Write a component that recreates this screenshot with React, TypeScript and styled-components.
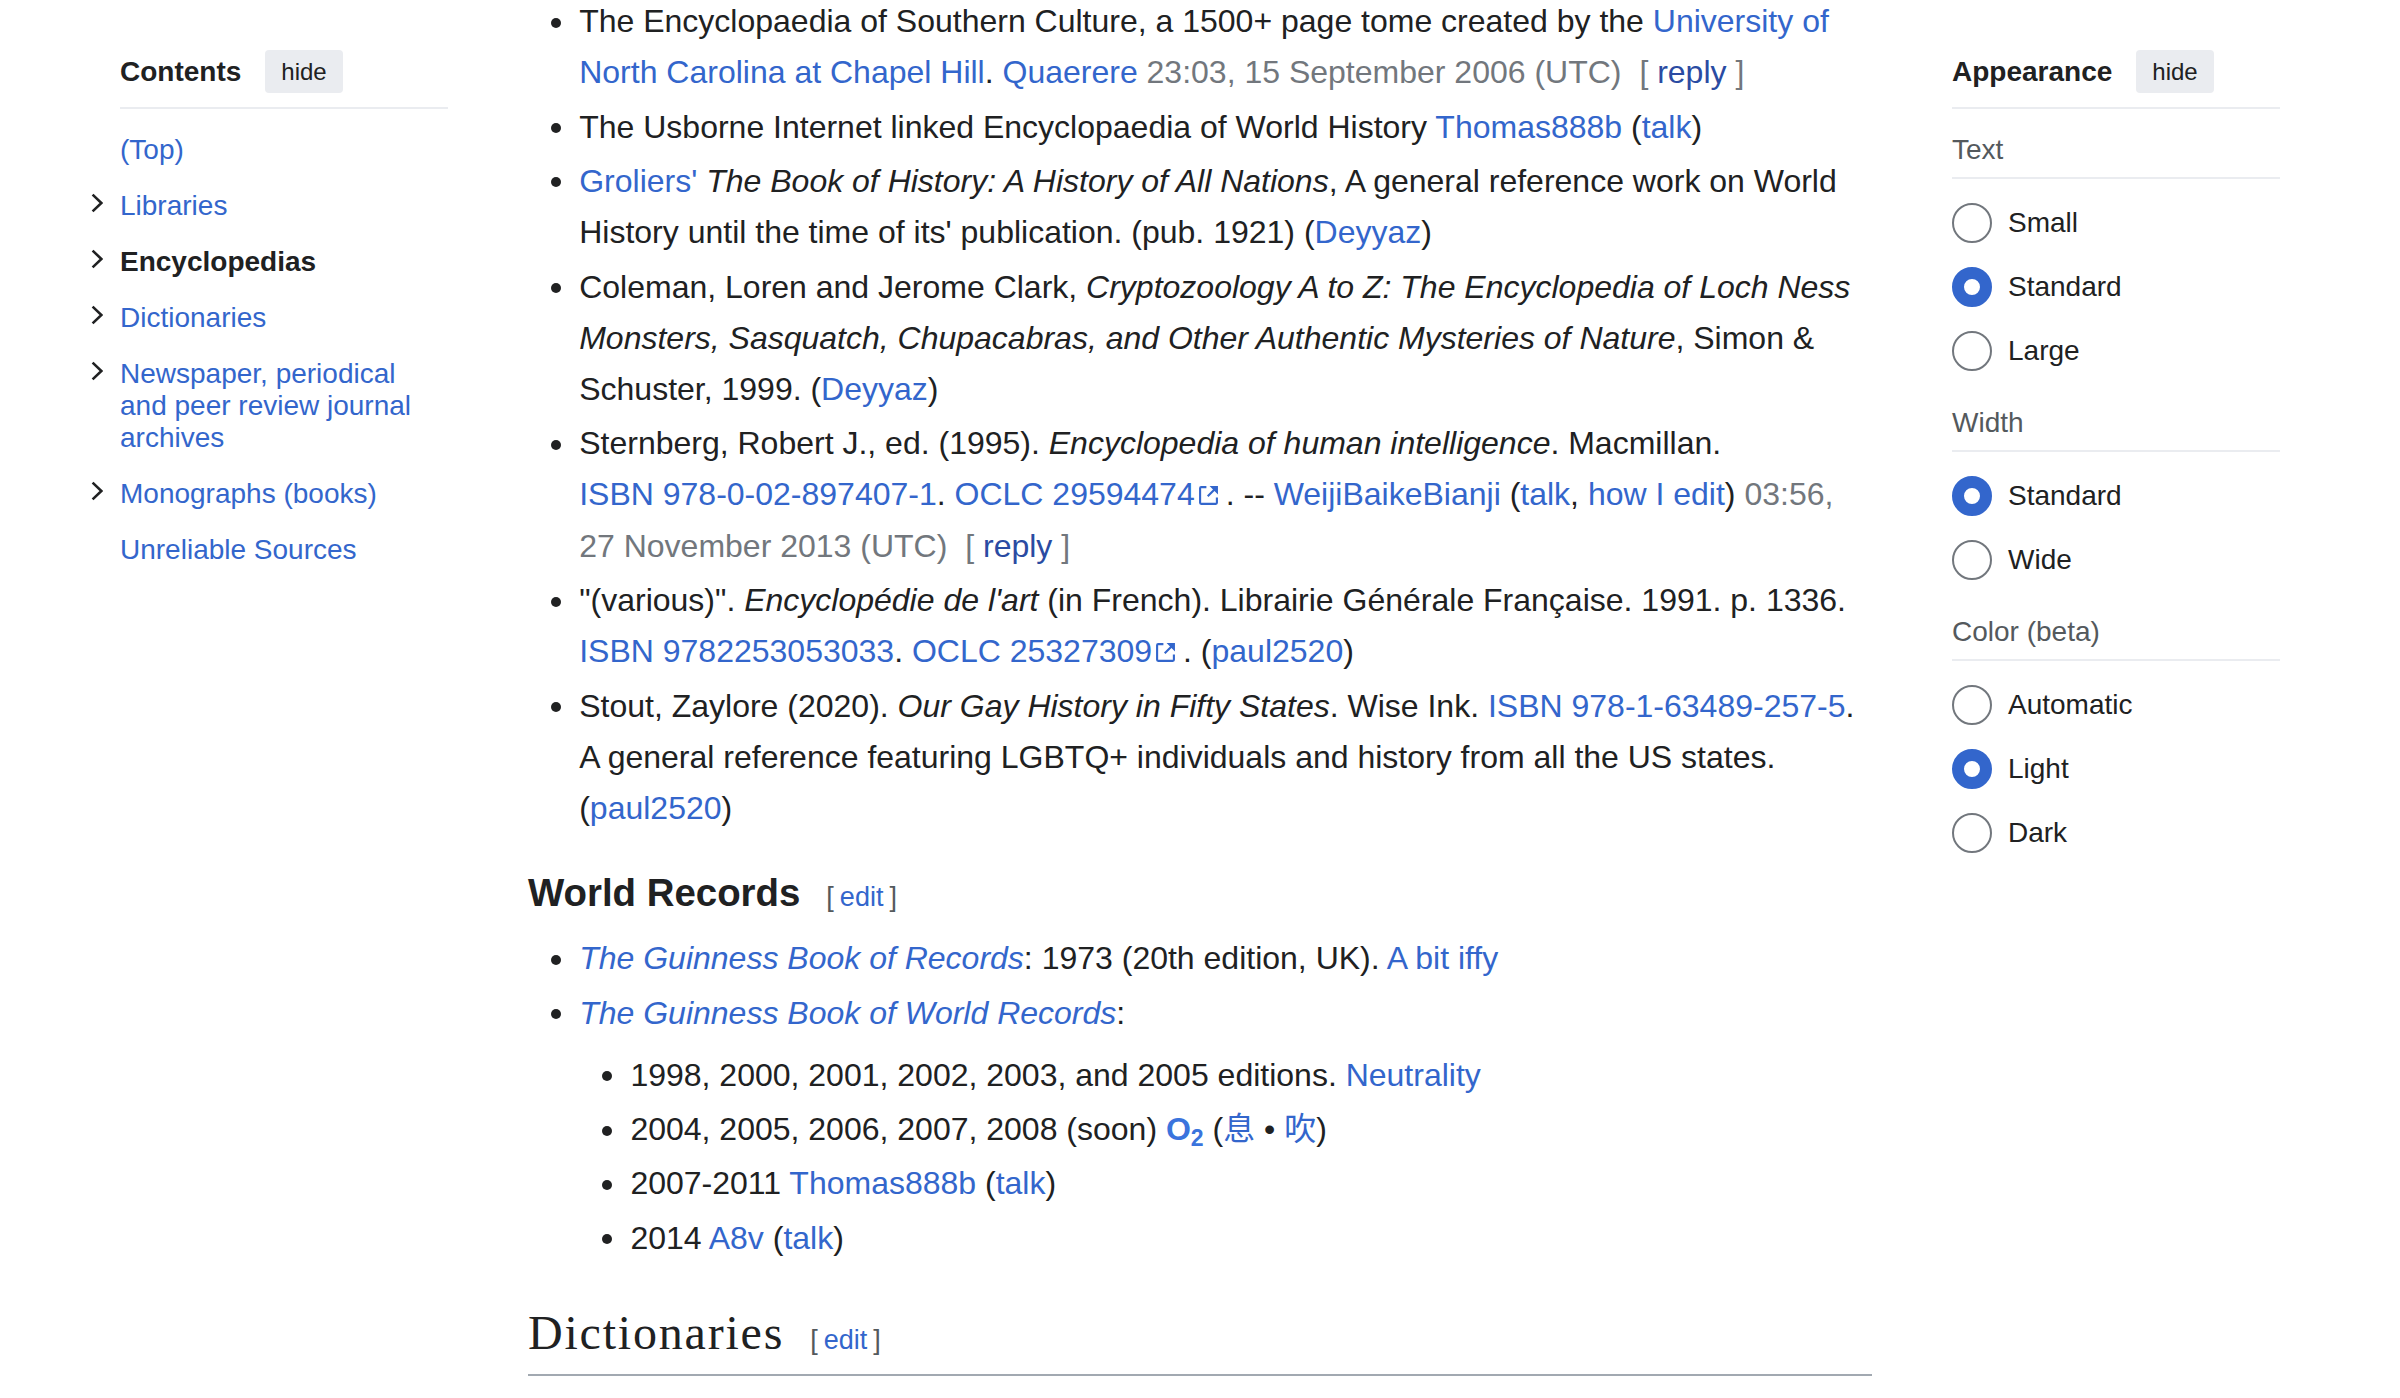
import styled, { createGlobalStyle } from "styled-components"

const GlobalStyle = createGlobalStyle`
  html, body {
    margin: 0;
    padding: 0;
    background: #fff;
  }
  body {
    font-family: "Liberation Sans", Arial, "Noto Sans CJK SC", sans-serif;
    color: #202122;
    overflow: hidden;
  }
`

const Page = styled.div`
  display: grid;
  grid-template-columns: 328px 1fr 328px;
  column-gap: 80px;
  align-items: start;
  padding: 0 120px;
  height: 1398px;
  overflow: hidden;
`

// ---------- side panels ----------

const Sidebar = styled.aside`
  padding-top: 50px;
`

const PanelHeader = styled.div`
  display: flex;
  align-items: center;
  gap: 24px;
  height: 43px;
  padding-bottom: 14px;
  border-bottom: 2px solid #eaecf0;
`

const PanelTitle = styled.div`
  font-size: 28px;
  font-weight: bold;
`

const HideButton = styled.button`
  height: 43px;
  padding: 0 16px;
  border: none;
  border-radius: 4px;
  background: #eaecf0;
  color: #202122;
  font-family: inherit;
  font-size: 24px;
`

const TocList = styled.ul`
  list-style: none;
  margin: 13px 0 0;
  padding: 0;
`

const TocItem = styled.li`
  display: flex;
  margin-left: -34px;
  padding: 12px 0;
  font-size: 28px;
  line-height: 32px;
`

const Toggle = styled.span`
  flex: none;
  width: 29px;
  padding: 3px 0 0 5px;

  svg {
    display: block;
  }
`

const TocText = styled.a<{ $current?: boolean }>`
  flex: 1;
  color: ${(p) => (p.$current ? "#202122" : "#3366cc")};
  font-weight: ${(p) => (p.$current ? "bold" : "normal")};
  text-decoration: none;
`

const Groups = styled.div`
  padding-top: 1px;
`

const GroupLabel = styled.div`
  margin-top: 24px;
  padding-bottom: 11px;
  border-bottom: 2px solid #eaecf0;
  color: #54595d;
  font-size: 28px;
  line-height: 32px;
`

const OptionList = styled.div`
  display: flex;
  flex-direction: column;
  margin: 12px 0 1px;
`

const Option = styled.label`
  display: flex;
  align-items: center;
  gap: 16px;
  height: 64px;
  font-size: 28px;
`

const Radio = styled.span<{ $checked?: boolean }>`
  box-sizing: border-box;
  flex: none;
  width: 40px;
  height: 40px;
  border-radius: 50%;
  background: #fff;
  border: ${(p) => (p.$checked ? "12px solid #3366cc" : "2px solid #72777d")};
`

// ---------- article ----------

const Main = styled.main`
  min-width: 0;
  margin-top: -4px;
  font-size: 32px;
  line-height: 1.6;
`

const List = styled.ul<{ $top: number; $indent?: number }>`
  list-style: none;
  margin: ${(p) => p.$top}px 0 0 ${(p) => p.$indent ?? 51.2}px;
  padding: 0;
`

const Item = styled.li`
  position: relative;
  margin-bottom: 3.2px;

  &::before {
    content: "";
    position: absolute;
    left: -28px;
    top: 21.5px;
    width: 10px;
    height: 10px;
    border-radius: 50%;
    background: #202122;
  }
`

const Link = styled.a<{ $nowrap?: boolean }>`
  color: #3366cc;
  text-decoration: none;
  white-space: ${(p) => (p.$nowrap ? "nowrap" : "normal")};
`

const Stamp = styled.span`
  color: #72777d;
`

const NoWrap = styled.span`
  white-space: nowrap;
`

const Reply = styled.span`
  margin-left: 9px;
  color: #72777d;
`

const ReplyLink = styled.a`
  color: #2a4ba2;
  text-decoration: none;
`

const ExtIcon = styled.svg`
  width: 21px;
  height: 21px;
  margin: 0 7px 0 3px;
  vertical-align: -1px;
  fill: #3366cc;
`

const Chem = styled.a`
  color: #3a74dd;
  font-weight: bold;
  text-decoration: none;
`

const Sub = styled.sub`
  font-size: 0.72em;
  line-height: 0;
  vertical-align: -0.28em;
`

const SubHeading = styled.h3`
  margin: 28px 0 0;
  font-size: 38.4px;
  line-height: 1.6;
  font-weight: bold;
`

const SectionHeading = styled.h2`
  margin: 36px 0 0;
  padding-bottom: 1px;
  border-bottom: 2px solid #a2a9b1;
  font-family: "Liberation Serif", "Times New Roman", serif;
  font-weight: normal;
  font-size: 48px;
  line-height: 66px;
  letter-spacing: 1.8px;
`

const EditSection = styled.span`
  margin-left: 26px;
  color: #54595d;
  font-family: "Liberation Sans", Arial, sans-serif;
  font-size: 27px;
  font-weight: normal;
  letter-spacing: 0;
  white-space: nowrap;
`

const EditLink = styled.a`
  margin: 0 6px;
  color: #3366cc;
  text-decoration: none;
`

const Chevron = () => (
  <svg width="12" height="20" viewBox="0 0 12 20">
    <polyline
      points="1.6,1.6 10.4,10 1.6,18.4"
      fill="none"
      stroke="#202122"
      strokeWidth="2.6"
    />
  </svg>
)

const External = () => (
  <ExtIcon viewBox="0 0 20 20">
    <path d="M17 17H3V3h5V1H3a2 2 0 0 0-2 2v14a2 2 0 0 0 2 2h14a2 2 0 0 0 2-2v-5h-2z" />
    <path d="M11 1l3.29 3.29-5.73 5.73 1.42 1.42 5.73-5.73L19 9V1z" />
  </ExtIcon>
)

const Edit = () => (
  <EditSection>
    [<EditLink>edit</EditLink>]
  </EditSection>
)

const ReplyButton = () => (
  <Reply>
    [ <ReplyLink>reply</ReplyLink> ]
  </Reply>
)

const toc = [
  { label: "(Top)", toggle: false },
  { label: "Libraries", toggle: true },
  { label: "Encyclopedias", toggle: true, current: true },
  { label: "Dictionaries", toggle: true },
  { label: "Newspaper, periodical and peer review journal archives", toggle: true },
  { label: "Monographs (books)", toggle: true },
  { label: "Unreliable Sources", toggle: false },
]

const appearance = [
  { label: "Text", options: ["Small", "Standard", "Large"], checked: 1 },
  { label: "Width", options: ["Standard", "Wide"], checked: 0 },
  { label: "Color (beta)", options: ["Automatic", "Light", "Dark"], checked: 1 },
]

const App = () => {
  return (
    <>
      <GlobalStyle />
      <Page>
        <Sidebar>
          <PanelHeader>
            <PanelTitle>Contents</PanelTitle>
            <HideButton>hide</HideButton>
          </PanelHeader>
          <TocList>
            {toc.map((t) => (
              <TocItem key={t.label}>
                <Toggle>{t.toggle && <Chevron />}</Toggle>
                <TocText $current={t.current}>{t.label}</TocText>
              </TocItem>
            ))}
          </TocList>
        </Sidebar>

        <Main>
          <List $top={0}>
            <Item>
              The Encyclopaedia of Southern Culture, a 1500+ page tome created by the{" "}
              <Link>University of North Carolina at Chapel Hill</Link>. <Link>Quaerere</Link>{" "}
              <Stamp>23:03, 15 September 2006 (UTC)</Stamp> <ReplyButton />
            </Item>
            <Item>
              The Usborne Internet linked Encyclopaedia of World History <Link>Thomas888b</Link> (
              <Link>talk</Link>)
            </Item>
            <Item>
              <Link>Groliers'</Link> <i>The Book of History: A History of All Nations</i>, A general
              reference work on World History until the time of its' publication. (pub. 1921) (
              <Link>Deyyaz</Link>)
            </Item>
            <Item>
              Coleman, Loren and Jerome Clark,{" "}
              <i>
                Cryptozoology A to Z: The Encyclopedia of Loch Ness Monsters, Sasquatch,
                Chupacabras, and Other Authentic Mysteries of Nature
              </i>
              , Simon &amp; Schuster, 1999. (<Link>Deyyaz</Link>)
            </Item>
            <Item>
              Sternberg, Robert J., ed. (1995). <i>Encyclopedia of human intelligence</i>.
              Macmillan. <Link $nowrap>ISBN 978-0-02-897407-1</Link>.{" "}
              <Link $nowrap>
                OCLC 29594474
                <External />
              </Link>
              . -- <Link>WeijiBaikeBianji</Link> (<Link>talk</Link>, <Link>how I edit</Link>){" "}
              <Stamp>
                03:56, <NoWrap>27 November 2013 (UTC)</NoWrap>
              </Stamp>{" "}
              <ReplyButton />
            </Item>
            <Item>
              "(various)". <i>Encyclopédie de l'art</i> (in French). Librairie Générale Française.
              1991. p. 1336. <Link $nowrap>ISBN 9782253053033</Link>.{" "}
              <Link $nowrap>
                OCLC 25327309
                <External />
              </Link>
              . (<Link>paul2520</Link>)
            </Item>
            <Item>
              Stout, Zaylore (2020). <i>Our Gay History in Fifty States</i>. Wise Ink.{" "}
              <Link $nowrap>ISBN 978-1-63489-257-5</Link>. A general reference featuring LGBTQ+
              individuals and history from all the US states. (<Link>paul2520</Link>)
            </Item>
          </List>

          <SubHeading>
            World Records
            <Edit />
          </SubHeading>

          <List $top={9.6}>
            <Item>
              <Link>
                <i>The Guinness Book of Records</i>
              </Link>
              : 1973 (20th edition, UK). <Link>A bit iffy</Link>
            </Item>
            <Item>
              <Link>
                <i>The Guinness Book of World Records</i>
              </Link>
              :
              <List $top={11}>
                <Item>
                  1998, 2000, 2001, 2002, 2003, and 2005 editions. <Link>Neutrality</Link>
                </Item>
                <Item>
                  2004, 2005, 2006, 2007, 2008 (soon){" "}
                  <Chem>
                    O<Sub>2</Sub>
                  </Chem>{" "}
                  (<Link>息</Link>
                  {" • "}
                  <Link>吹</Link>)
                </Item>
                <Item>
                  2007-2011 <Link>Thomas888b</Link> (<Link>talk</Link>)
                </Item>
                <Item>
                  2014 <Link>A8v</Link> (<Link>talk</Link>)
                </Item>
              </List>
            </Item>
          </List>

          <SectionHeading>
            Dictionaries
            <Edit />
          </SectionHeading>
        </Main>

        <Sidebar>
          <PanelHeader>
            <PanelTitle>Appearance</PanelTitle>
            <HideButton>hide</HideButton>
          </PanelHeader>
          <Groups>
            {appearance.map((g) => (
              <section key={g.label}>
                <GroupLabel>{g.label}</GroupLabel>
                <OptionList>
                  {g.options.map((o, i) => (
                    <Option key={o}>
                      <Radio $checked={i === g.checked} />
                      {o}
                    </Option>
                  ))}
                </OptionList>
              </section>
            ))}
          </Groups>
        </Sidebar>
      </Page>
    </>
  )
}

export default App
